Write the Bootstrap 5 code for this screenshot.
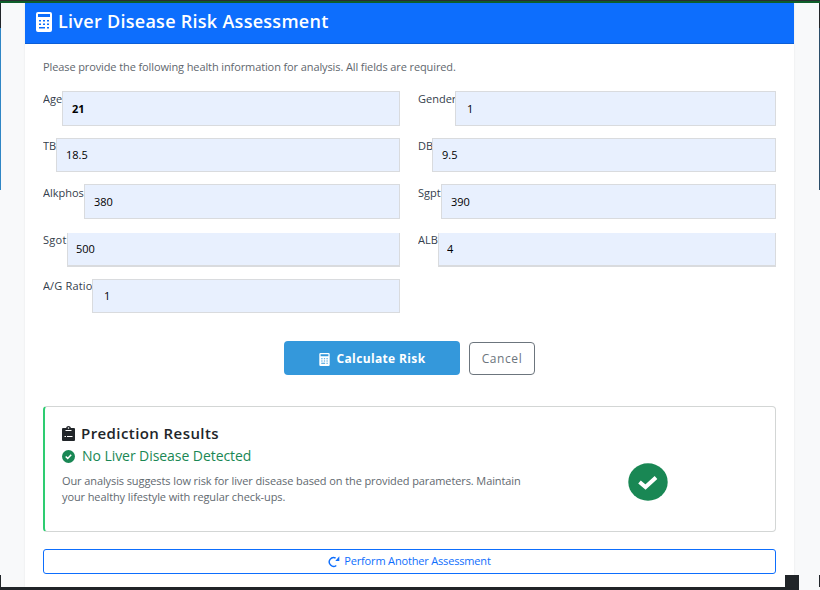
<!DOCTYPE html>
<html lang="en">
<head>
<meta charset="utf-8">
<meta name="viewport" content="width=device-width, initial-scale=1">
<title>Liver Disease Risk Assessment</title>
<link rel="stylesheet" href="https://cdn.jsdelivr.net/npm/bootstrap@5.3.0/dist/css/bootstrap.min.css">
<style>
body{font-family:"Open Sans","Noto Sans",sans-serif;font-size:11px;line-height:16px;background:#f8f9fa;width:820px;height:590px;overflow:hidden}
svg{display:block;flex:none}
.top-strip{height:3px;background:#0f5f2b;border-top:1px solid #2b2d31}
.stage{height:584px}
.edge{width:1px;height:187px;background:linear-gradient(#212529 25px,#2f86c5 25px)}
.edge-right{background:linear-gradient(#212529 25px,#2b4d68 25px)}
.edge-foot{width:1px;height:12px;background:#212529}
.assess{width:769px;margin:0 25px 0 24px;background:#fff;box-shadow:0 0 2px rgba(0,0,0,.08)}
.assess-head{height:41px;background:#0d6efd;border-bottom:1px solid #0b5ed7;padding:0 0 3px 11px;color:#fff;gap:6px}
.assess-head h1{font-size:18px;font-weight:600;letter-spacing:.28px;line-height:24px;padding-bottom:2px}
.assess-body{padding:14px 18px 0}
.intro{color:#5f676e;letter-spacing:-.11px;line-height:17px;margin-bottom:16px}
.fields{display:grid;grid-template-columns:357px 358px;column-gap:18px;grid-template-rows:47px 46px 49px 46px 34px}
.fields label{font-weight:500;color:#34404c;overflow:hidden;white-space:nowrap;line-height:16px;height:19px}
.w-age{width:19px}.w-gender{width:37px}.w-tb{width:13px}.w-db{width:14px}.w-alk{width:41px;padding-top:1px}.w-sgpt{width:23px;padding-top:1px}.w-sgot{width:24px;letter-spacing:.3px}.w-alb{width:20px}.w-ag{width:49px;letter-spacing:.15px}
.w-sgot,.w-alb,.w-ag{line-height:14px!important}
.fields .form-control{flex:1;min-width:0;width:auto;height:34px;border:1px solid #d9dbde;border-radius:0;background:#e8f0fe;color:#000;font-size:11px;padding:0 9px 1px;line-height:31px}
.fields .tall{height:35px}
.fields .shifted{border-top:0;border-bottom-width:2px;padding:0 8px 1px}
.fields .inset{padding-left:11px}
.actions{margin-top:28px;gap:9px;height:34px}
.btn-calc{width:176px;height:34px;background:#3498db;color:#fff;border:0;border-radius:4px;font-size:12px;font-weight:700;letter-spacing:.36px;padding:2px 0 0;gap:7px}
.btn-cancel{width:66px;height:33px;border-radius:4px;font-size:12px;letter-spacing:.6px;padding:1px 0 0}
.result{margin-top:31px;height:126px;border:1px solid #d3d6d5;border-left:2px solid #2ecc71;border-radius:4px;padding:16px 0 0 17px}
.result h2,.result h3{gap:7px}
.result h2{font-size:15px;font-weight:600;letter-spacing:.42px;line-height:20px;color:#212529}
.result h3{font-size:14px;font-weight:500;letter-spacing:-.06px;line-height:20px;color:#198754;margin-top:3px}
.result h2{gap:6px}
.result p{color:#62696f;letter-spacing:-.1px;margin-top:7px}
.result-icon{margin:40px 107px 0 0}
.btn-again{margin-top:17px;height:25px;border-radius:3px;font-size:11px;letter-spacing:-.17px;padding:0}
.bottom-bar{height:3px;width:799px;background:#212529}
.corner{width:14px;height:12px;background:#212529;position:absolute;right:-5px;bottom:0}
</style>
<script src="https://cdn.jsdelivr.net/npm/bootstrap@5.3.0/dist/js/bootstrap.bundle.min.js"></script>
</head>
<body>
<svg width="0" height="0" class="position-absolute" aria-hidden="true">
<symbol id="calc" viewBox="0 0 16 20"><path fill="currentColor" fill-rule="evenodd" d="M2 0h12a2 2 0 0 1 2 2v16a2 2 0 0 1-2 2H2a2 2 0 0 1-2-2V2a2 2 0 0 1 2-2zm0 2v3h12V2zM3 8v1.500h2V8zm4 0v1.500h2V8zm4 0v1.500h2V8zM3 11.500V13h2v-1.500zm4 0V13h2v-1.500zm4 0V13h2v-1.500zM3 15v1.500h6V15zm8 0v1.500h2V15z"/></symbol>
<symbol id="check" viewBox="0 0 40 38"><ellipse cx="20" cy="19" rx="19.700" ry="18.700" fill="#198754"/><path d="M11.500 19l6 5 10.500-9.500" fill="none" stroke="#fff" stroke-width="4"/></symbol>
</svg>
<div class="top-strip"></div>
<div class="stage d-flex">
  <div class="d-flex flex-column justify-content-between"><div class="edge"></div><div class="edge-foot"></div></div>
  <main class="assess position-relative">
    <header class="assess-head d-flex align-items-center">
      <svg width="16" height="20"><use href="#calc"/></svg>
      <h1 class="m-0 text-nowrap">Liver Disease Risk Assessment</h1>
    </header>
    <div class="assess-body">
      <p class="intro">Please provide the following health information for analysis. All fields are required.</p>
      <form>
        <div class="fields">
          <div class="d-flex"><label class="w-age" for="age">Age</label><input class="form-control tall fw-bold" id="age" value="21"></div>
          <div class="d-flex"><label class="w-gender" for="gender">Gender</label><input class="form-control tall inset" id="gender" value="1"></div>
          <div class="d-flex"><label class="w-tb" for="tb">TB</label><input class="form-control" id="tb" value="18.5"></div>
          <div class="d-flex"><label class="w-db" for="db">DB</label><input class="form-control" id="db" value="9.5"></div>
          <div class="d-flex"><label class="w-alk" for="alk">Alkphos</label><input class="form-control tall" id="alk" value="380"></div>
          <div class="d-flex"><label class="w-sgpt" for="sgpt">Sgpt</label><input class="form-control tall" id="sgpt" value="390"></div>
          <div class="d-flex"><label class="w-sgot" for="sgot">Sgot</label><input class="form-control shifted" id="sgot" value="500"></div>
          <div class="d-flex"><label class="w-alb" for="alb">ALB</label><input class="form-control shifted" id="alb" value="4"></div>
          <div class="d-flex"><label class="w-ag" for="ag">A/G Ratio</label><input class="form-control inset" id="ag" value="1"></div>
        </div>
        <div class="actions d-flex justify-content-center align-items-end">
          <button type="button" class="btn btn-calc d-flex align-items-center justify-content-center"><svg width="11" height="13"><use href="#calc"/></svg>Calculate Risk</button>
          <button type="button" class="btn btn-outline-secondary btn-cancel">Cancel</button>
        </div>
      </form>
      <section class="result d-flex justify-content-between">
        <div>
          <h2 class="m-0 d-flex align-items-center"><svg width="13" height="15" viewBox="0 0 13 15"><path fill="#212529" d="M0 3q0-1 1-1h3q.5-2 2.500-2T9 2h3q1 0 1 1v11q0 1-1 1H1q-1 0-1-1z"/><path stroke="#fff" d="M3.500 4.500h6M2.500 10.500h1.500M5 10.500h5.500"/><circle cx="6.500" cy="2" r=".8" fill="#fff"/></svg><span>Prediction Results</span></h2>
          <h3 class="mb-0 d-flex align-items-center"><svg width="13" height="13" viewBox="0 0 13 13"><circle cx="6.500" cy="6.500" r="6.500" fill="#198754"/><path d="M3.700 6.500l2 1.900 3.500-3.700" fill="none" stroke="#fff" stroke-width="1.500"/></svg><span>No Liver Disease Detected</span></h3>
          <p class="mb-0">Our analysis suggests low risk for liver disease based on the provided parameters. Maintain<br>your healthy lifestyle with regular check-ups.</p>
        </div>
        <div class="result-icon"><svg width="40" height="38" viewBox="0 0 40 38"><use href="#check"/></svg></div>
      </section>
      <button type="button" class="btn btn-outline-primary btn-again w-100 d-flex align-items-center justify-content-center gap-1"><svg width="12" height="12" viewBox="0 0 12 12"><path d="M8.300 9.500A4.400 4.400 0 1 1 7.600 2" fill="none" stroke="currentColor" stroke-width="1.400"/><path d="M11.300.3v4.700H7.300z" fill="currentColor"/></svg>Perform Another Assessment</button>
    </div>
    <div class="corner"></div>
  </main>
  <div class="d-flex flex-column justify-content-between"><div class="edge edge-right"></div><div class="edge-foot"></div></div>
</div>
<div class="bottom-bar"></div>
</body>
</html>
